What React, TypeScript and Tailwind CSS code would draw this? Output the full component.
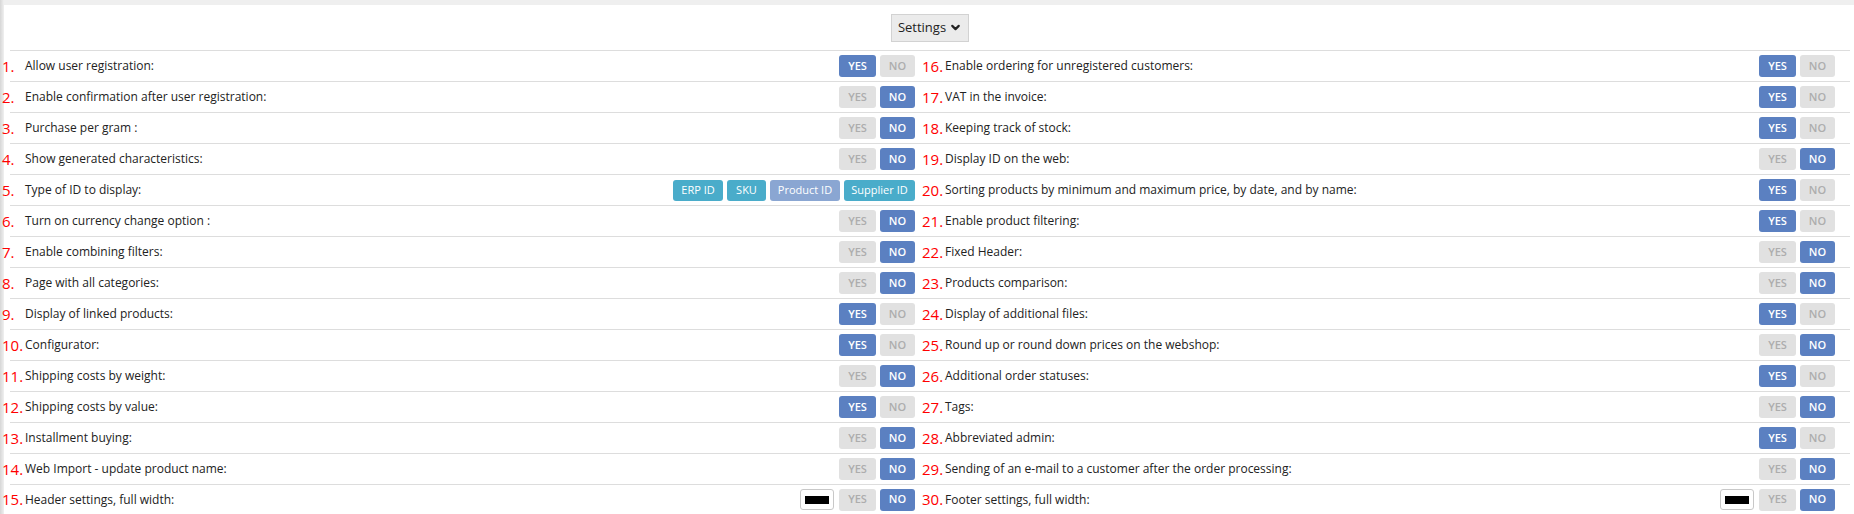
import { ChevronDown } from 'lucide-react'

type Setting = {
  n: number
  label: string
  value?: boolean
  ids?: boolean
  swatch?: boolean
}

const left: Setting[] = [
  { n: 1, label: 'Allow user registration:', value: true },
  { n: 2, label: 'Enable confirmation after user registration:', value: false },
  { n: 3, label: 'Purchase per gram :', value: false },
  { n: 4, label: 'Show generated characteristics:', value: false },
  { n: 5, label: 'Type of ID to display:', ids: true },
  { n: 6, label: 'Turn on currency change option :', value: false },
  { n: 7, label: 'Enable combining filters:', value: false },
  { n: 8, label: 'Page with all categories:', value: false },
  { n: 9, label: 'Display of linked products:', value: true },
  { n: 10, label: 'Configurator:', value: true },
  { n: 11, label: 'Shipping costs by weight:', value: false },
  { n: 12, label: 'Shipping costs by value:', value: true },
  { n: 13, label: 'Installment buying:', value: false },
  { n: 14, label: 'Web Import - update product name:', value: false },
  { n: 15, label: 'Header settings, full width:', value: false, swatch: true },
]

const right: Setting[] = [
  { n: 16, label: 'Enable ordering for unregistered customers:', value: true },
  { n: 17, label: 'VAT in the invoice:', value: true },
  { n: 18, label: 'Keeping track of stock:', value: true },
  { n: 19, label: 'Display ID on the web:', value: false },
  { n: 20, label: 'Sorting products by minimum and maximum price, by date, and by name:', value: true },
  { n: 21, label: 'Enable product filtering:', value: true },
  { n: 22, label: 'Fixed Header:', value: false },
  { n: 23, label: 'Products comparison:', value: false },
  { n: 24, label: 'Display of additional files:', value: true },
  { n: 25, label: 'Round up or round down prices on the webshop:', value: false },
  { n: 26, label: 'Additional order statuses:', value: true },
  { n: 27, label: 'Tags:', value: false },
  { n: 28, label: 'Abbreviated admin:', value: true },
  { n: 29, label: 'Sending of an e-mail to a customer after the order processing:', value: false },
  { n: 30, label: 'Footer settings, full width:', value: false, swatch: true },
]

function YesNo({ value }: { value: boolean }) {
  const on = 'bg-[#5b80c1] text-white'
  const off = 'bg-[#e1e1e1] text-[#adadad]'
  return (
    <div className="flex gap-[4px]">
      <span className={`flex h-[22px] w-[37px] items-center justify-center rounded-[3px] text-[11px] font-semibold ${value ? on : off}`}>
        YES
      </span>
      <span className={`flex h-[22px] w-[35px] items-center justify-center rounded-[3px] text-[11px] font-semibold ${!value ? on : off}`}>
        NO
      </span>
    </div>
  )
}

function IdButtons() {
  const items = [
    { label: 'ERP ID', w: 'w-[50px]', bg: 'bg-[#4aacca]' },
    { label: 'SKU', w: 'w-[39px]', bg: 'bg-[#4aacca]' },
    { label: 'Product ID', w: 'w-[70px]', bg: 'bg-[#8aa6d2]' },
    { label: 'Supplier ID', w: 'w-[71px]', bg: 'bg-[#4aacca]' },
  ]
  return (
    <div className="flex gap-[4px]">
      {items.map((it) => (
        <span
          key={it.label}
          className={`flex h-[21px] items-center justify-center rounded-[3px] text-[11px] text-white ${it.w} ${it.bg}`}
        >
          {it.label}
        </span>
      ))}
    </div>
  )
}

function Row({ s, last }: { s: Setting; last?: boolean }) {
  return (
    <div className={`flex items-center border-b border-[#dddddd] pr-[15px] ${last ? 'h-[30px]' : 'h-[31px]'}`}>
      {/* number hangs a little left of the row line */}
      <span className="-ml-[8px] w-[23px] shrink-0 whitespace-nowrap text-[15px] leading-none text-[#ff0000]">
        {s.n}.
      </span>
      <span className="whitespace-nowrap text-[12px] text-[#222]">{s.label}</span>
      <div className="ml-auto flex items-center gap-[5px]">
        {s.swatch && (
          <span className="flex h-[21px] w-[34px] items-center justify-center rounded-[3px] border border-[#c8c8c8] bg-white">
            <span className="h-[8px] w-[24px] bg-black" />
          </span>
        )}
        {s.ids ? <IdButtons /> : <YesNo value={!!s.value} />}
      </div>
    </div>
  )
}

export default function App() {
  return (
    <div className="flex h-[514px] w-[1854px] overflow-hidden bg-[#efefef] font-['Open_Sans',sans-serif]">
      <div className="w-[4px] shrink-0 bg-gradient-to-r from-[#d6d6d6] to-[#f0f0f0]" />
      <div className="mt-[5px] flex-1 bg-white pl-[6px] pr-[4px]">
        <div className="flex h-[46px] items-center justify-center border-b border-[#dddddd]">
          <button className="flex h-[28px] w-[78px] items-center justify-center gap-[3px] border border-[#d2d2d2] bg-[#ebebeb] text-[13px] text-[#222]">
            Settings
            <ChevronDown className="h-[13px] w-[13px]" strokeWidth={4} />
          </button>
        </div>
        <div className="grid grid-cols-2">
          <div>
            {left.map((s, i) => (
              <Row key={s.n} s={s} last={i === left.length - 1} />
            ))}
          </div>
          <div>
            {right.map((s, i) => (
              <Row key={s.n} s={s} last={i === right.length - 1} />
            ))}
          </div>
        </div>
      </div>
    </div>
  )
}
